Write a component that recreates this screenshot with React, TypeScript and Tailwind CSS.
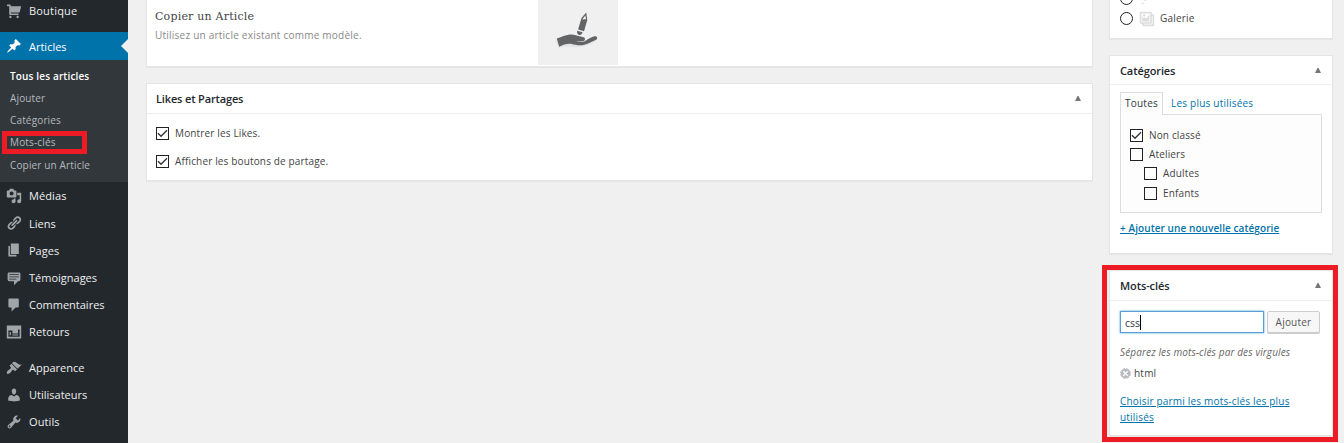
import React from "react";

const icons = {
  cart: "M6 13h9c.55 0 1 .45 1 1s-.45 1-1 1H5c-.55 0-1-.45-1-1V4H2c-.55 0-1-.45-1-1s.45-1 1-1h3c.55 0 1 .45 1 1v1h13l-2 8H6v1zm-.5 3c.83 0 1.5.67 1.5 1.5S6.33 19 5.5 19 4 18.33 4 17.5 4.67 16 5.5 16zm9 0c.83 0 1.5.67 1.5 1.5s-.67 1.5-1.5 1.5-1.5-.67-1.5-1.5.67-1.5 1.5-1.5z",
  pin: "M10.44 3.02l1.82-1.82 6.36 6.35-1.83 1.82c-1.05-.68-2.48-.57-3.41.36l-.75.75c-.92.93-1.04 2.35-.35 3.41l-1.83 1.82-2.41-2.41-2.8 2.79c-.42.42-3.38 2.71-3.8 2.29s1.86-3.39 2.28-3.81l2.79-2.79L4.1 9.36l1.83-1.82c1.05.69 2.48.57 3.4-.36l.75-.75c.93-.92 1.05-2.35.36-3.41z",
  media: "M13 11V4c0-.55-.45-1-1-1h-1.67L9 1H5L3.67 3H2c-.55 0-1 .45-1 1v7c0 .55.45 1 1 1h10c.55 0 1-.45 1-1zM7 4.5c1.38 0 2.5 1.12 2.5 2.5S8.38 9.5 7 9.5 4.5 8.38 4.5 7 5.62 4.5 7 4.5zM14 6h5v10.5c0 1.38-1.12 2.5-2.5 2.5S14 17.88 14 16.5s1.12-2.5 2.5-2.5c.17 0 .34.02.5.05V9h-3V6zm-4 8.05V13h2v3.5c0 1.38-1.12 2.5-2.5 2.5S7 17.88 7 16.5 8.12 14 9.5 14c.17 0 .34.02.5.05z",
  link: "M17.74 2.76c1.68 1.69 1.68 4.41 0 6.1l-1.53 1.52c-1.12 1.12-2.7 1.47-4.14 1.09l2.62-2.61.76-.77.76-.76c.84-.84.84-2.2 0-3.04-.84-.85-2.2-.85-3.04 0l-.77.76-3.38 3.38c-.37-1.44-.02-3.02 1.1-4.14l1.52-1.53c1.69-1.68 4.42-1.68 6.1 0zM8.59 13.43l5.34-5.34c.42-.42.42-1.1 0-1.52-.44-.43-1.13-.39-1.53 0l-5.33 5.34c-.42.42-.42 1.1 0 1.52.44.43 1.13.39 1.52 0zm-.76 2.29l4.14-4.15c.38 1.44.03 3.02-1.09 4.14l-1.52 1.53c-1.69 1.68-4.41 1.68-6.1 0-1.68-1.68-1.68-4.42 0-6.1l1.53-1.52c1.12-1.12 2.7-1.47 4.14-1.1l-4.14 4.15c-.85.84-.85 2.2 0 3.05.84.84 2.2.84 3.04 0z",
  page: "M6 15V2h10v13H6zm-1 1h8v2H3V5h2v11z",
  testimonial: "M4 3h12c.55 0 1.02.2 1.41.59S18 4.45 18 5v7c0 .55-.2 1.02-.59 1.41S16.55 14 16 14h-1l-5 5v-5H4c-.55 0-1.02-.2-1.41-.59S2 12.55 2 12V5c0-.55.2-1.02.59-1.41S3.45 3 4 3zm12 2.200H4v1.200h12V5.200zm0 2.800H4v1.200h12V8zm-3 2.800H4V12h9v-1.200z",
  comment: "M4 2h11c.6 0 1 .4 1 1v9c0 .6-.4 1-1 1h-3l-5 5v-5H4c-.6 0-1-.4-1-1V3c0-.6.400-1 1-1z",
  feedback: "M1 2h18v16H1zM3 7v9h14V7h-2v5H8V8H3zM8 13h7v1.400H8zM4.500 10h1.500v4H4.500z",
  brush: "M14.48 11.06L7.41 3.99l1.5-1.5c.5-.56 2.3-.47 3.51.32 1.21.8 1.43 1.28 2.91 2.1 1.18.64 2.45 1.26 4.45.85zm-.71.71L6.7 4.7 4.93 6.47c-.39.39-.39 1.02 0 1.41l1.06 1.06c.39.39.39 1.03 0 1.42-.6.6-1.43 1.11-2.21 1.69-.35.26-.7.53-1.01.84C1.43 14.23.4 16.08 1.4 17.07c.99 1 2.84-.03 4.18-1.36.31-.31.58-.66.85-1.02.57-.78 1.08-1.61 1.69-2.21.39-.39 1.02-.39 1.41 0l1.06 1.06c.39.39 1.02.39 1.41 0z",
  user: "M10 9.25c-2.27 0-2.73-3.44-2.73-3.44C7 4.02 7.82 2 9.97 2c2.16 0 2.98 2.02 2.71 3.81 0 0-.41 3.44-2.68 3.44zm0 2.57L12.72 10c2.39 0 4.52 2.33 4.52 4.53v2.49s-3.65 1.13-7.24 1.13c-3.65 0-7.24-1.13-7.24-1.13v-2.49c0-2.25 1.94-4.48 4.47-4.48z",
  wrench: "M16.68 9.77c-1.34 1.34-3.3 1.67-4.95.99l-5.41 6.52c-.99.99-2.59.99-3.58 0s-.99-2.59 0-3.57l6.52-5.42c-.68-1.65-.35-3.61.99-4.95 1.28-1.28 3.12-1.62 4.72-1.06l-2.89 2.89 2.82 2.82 2.86-2.87c.53 1.58.18 3.39-1.08 4.65zM3.81 16.21c.4.39 1.04.39 1.43 0 .4-.4.4-1.04 0-1.43-.39-.4-1.03-.4-1.43 0-.39.39-.39 1.03 0 1.43z",
  gallery: "M16 4h1.96c.57 0 1.04.47 1.04 1.04v12.92c0 .57-.47 1.04-1.04 1.04H5.04C4.47 19 4 18.53 4 17.96V16H2.040C1.47 16 1 15.53 1 14.96V2.04C1 1.47 1.47 1 2.04 1h12.92c.57 0 1.04.47 1.04 1.04V4zM3 14h11V3H3v11zm5-8.5C8 4.67 7.33 4 6.5 4S5 4.67 5 5.5 5.67 7 6.5 7 8 6.33 8 5.5zm2 4.500s1-5 3-5v8H4V7c2 0 2 3 2 3s.33-2 2-2 2 2 2 2zm7 7V6h-1v8.96c0 .57-.47 1.04-1.04 1.04H6v1h11z",
};

type IconName = keyof typeof icons;

function Icon({ name, className = "" }: { name: IconName; className?: string }) {
  return (
    <svg viewBox="0 0 20 20" className={`size-4 shrink-0 ${className}`} fill="currentColor" fillRule="evenodd">
      <path d={icons[name]} />
    </svg>
  );
}

function MenuItem({ icon, label, tracking = "" }: { icon: IconName; label: string; tracking?: string }) {
  return (
    <a className="flex h-[27.2px] items-center pl-1.5 text-[11px] text-[#eeeeee]">
      <Icon name={icon} className="mr-[7px] text-[#a0a5aa]" />
      <span className={`pt-px whitespace-nowrap ${tracking}`}>{label}</span>
    </a>
  );
}

function Check({ checked = false }: { checked?: boolean }) {
  return (
    <span className="flex size-[13px] shrink-0 items-center justify-center border border-[#222222] bg-white">
      {checked && (
        <svg viewBox="0 0 11 11" className="size-[11px]" fill="none" stroke="#333333" strokeWidth="1.4">
          <path d="M1 5.3 4 8.300 10 2.200" />
        </svg>
      )}
    </span>
  );
}

function CheckRow({ label, checked, className }: { label: string; checked?: boolean; className: string }) {
  return (
    <label className={`flex items-center whitespace-nowrap text-[10px] tracking-[0.15px] text-[#444444] ${className}`}>
      <Check checked={checked} />
      <span className="ml-1.5">{label}</span>
    </label>
  );
}

function Header({ title, className, tracking = "" }: { title: string; className: string; tracking?: string }) {
  return (
    <header className={`flex items-center justify-between border-b border-[#eeeeee] ${className}`}>
      <h2 className={`pt-0.5 text-[11px] font-semibold text-[#23282d] ${tracking}`}>{title}</h2>
      <svg viewBox="0 0 6 5" className="h-[5px] w-1.5" fill="#72777c">
        <path d="M0 5 2.500 0h1L6 5z" />
      </svg>
    </header>
  );
}

const card = "border border-[#e5e5e5] bg-white shadow-[0_1px_1px_rgba(0,0,0,0.04)]";

function Sidebar() {
  return (
    <nav className="h-full w-32 shrink-0 overflow-hidden bg-[#23282d]">
      <div className="-mt-[3px] h-[35px] pt-[0.500px]">
        <MenuItem icon="cart" label="Boutique" tracking="tracking-[0.2px]" />
      </div>
      <a className="flex h-7 items-center bg-[#0073aa] pl-1.5 text-[11px] text-white">
        <Icon name="pin" className="mr-[7px]" />
        <span className="grow pt-[3px]">Articles</span>
        <svg viewBox="0 0 7 14" className="h-3.5 w-[7px]" fill="#f0f0f0">
          <path d="M7 0v14L0 7z" />
        </svg>
      </a>
      <div className="flex h-[122px] flex-col bg-[#32373c] pt-[5px] text-[10px] tracking-[0.15px] whitespace-nowrap text-[#b4b9be]">
        <a className="flex h-[22px] items-center pl-2.5 font-semibold text-white">Tous les articles</a>
        <a className="flex h-[22px] items-center pl-2.5">Ajouter</a>
        <a className="flex h-[22px] items-center pl-2.5">Catégories</a>
        <a className="ml-0.5 flex h-[23px] w-[85px] items-center border-[5px] border-[#ed1c24] pl-[3px] leading-3">
          <span className="-mt-px">Mots-clés</span>
        </a>
        <a className="flex h-[23px] items-center pl-2.5">Copier un Article</a>
      </div>
      <div className="pt-[0.500px]">
        <MenuItem icon="media" label="Médias" tracking="tracking-[0.1px]" />
        <MenuItem icon="link" label="Liens" />
        <MenuItem icon="page" label="Pages" />
        <MenuItem icon="testimonial" label="Témoignages" />
        <MenuItem icon="comment" label="Commentaires" />
        <MenuItem icon="feedback" label="Retours" tracking="tracking-[0.1px]" />
      </div>
      <div className="pt-[8.500px]">
        <MenuItem icon="brush" label="Apparence" />
        <MenuItem icon="user" label="Utilisateurs" />
        <MenuItem icon="wrench" label="Outils" tracking="tracking-[0.1px]" />
      </div>
    </nav>
  );
}

function HandPencil() {
  return (
    <svg viewBox="0 0 80 65" className="h-[65px] w-20 shrink-0 bg-[#f0f0f0]">
      <path fill="#e4e4e4" transform="translate(-1.500 1)" d="M19 39l3 8c8-3 15 0 23-1 5-.7 10-3.500 14-6z" />
      <g fill="#636466">
        <path d="M18.800 38.500c4-.8 8-3.600 13-4 5-.2 8 1.800 13 2.500 2.500.4 2.800 2.700 1.200 4-2.500.8-5 .3-7.800.4 3 1 7 1 9-.4 3-2 5.500-3.700 9-4.700 3-.6 4 2.200 1.700 3.600-4 1.500-8 4-12.500 5-4.500 1-8-.3-11.900-.9-4.500-.6-8 .9-12.300 2.700z" />
        <path d="m43.500 18 4.700-5.500 1.100 7.500-3.300 11.300-5.900-1.800z" />
        <path d="m39.200 30.800 5.300 1.500c-.5 2-1.700 3.100-3.400 2.600s-2.400-2-1.900-4.100z" />
      </g>
      <path d="m44.400 19.200 2.900-3.700.9 4-1.400-.6-.9.700z" fill="#f0f0f0" />
    </svg>
  );
}

function MainColumn() {
  return (
    <main className="ml-[18px] flex w-[947px] shrink-0 flex-col gap-4">
      <section className={`${card} flex h-[67px] border-t-0`}>
        <div className="w-[391px] pt-2 pl-2">
          <h3 className="font-['DejaVu_Serif',serif] text-[11px] leading-[17px] tracking-[0.2px] text-[#444444]">Copier un Article</h3>
          <p className="text-[10px] leading-[21px] tracking-[0.23px] text-[#888888]">Utilisez un article existant comme modèle.</p>
        </div>
        <HandPencil />
      </section>
      <section className={`${card} h-[98px]`}>
        <Header title="Likes et Partages" className="h-[30px] pr-[11px] pl-[9px]" tracking="tracking-[-0.15px]" />
        <div className="flex flex-col pt-[5px] pl-[9px]">
          <CheckRow label="Montrer les Likes." checked className="h-7" />
          <CheckRow label="Afficher les boutons de partage." checked className="h-7" />
        </div>
      </section>
    </main>
  );
}

function Aside() {
  return (
    <aside className="ml-[9px] flex w-[236px] shrink-0 flex-col">
      <section className={`${card} ml-[7px] h-[39px] w-56 overflow-hidden border-t-0 pl-2.5`}>
        <div className="-mt-2.5 flex h-[18px] items-center">
          <span className="mt-[-1px] size-[13px] rounded-full border border-[#222222]" />
          <svg viewBox="0 0 8 8" className="mt-1 ml-2 size-2" fill="none" stroke="#dddddd" strokeWidth="1.500">
            <path d="M1 6.500h1.500M4 0v4M6 0v2" />
          </svg>
        </div>
        <div className="flex h-[21px] items-center text-[10px] tracking-[0.18px] text-[#444444]">
          <span className="size-[13px] rounded-full border border-[#222222]" />
          <Icon name="gallery" className="mr-[5px] ml-1.5 text-[#dddddd]" />
          Galerie
        </div>
      </section>
      <section className={`${card} mt-4 ml-[7px] h-[199px] w-56`}>
        <Header title="Catégories" className="h-[29px] pt-px pr-[11px] pl-2.5" tracking="tracking-[-0.1px]" />
        <div className="px-2.5 pt-[7px] text-[10px] tracking-[0.22px]">
          <div className="flex h-[22px] items-center">
            <span className="-mb-px flex h-[23px] w-[43px] items-center justify-center border border-b-0 border-[#dddddd] bg-[#fdfdfd] pb-0.5 text-[#32373c]">Toutes</span>
            <span className="ml-2 text-[#0073aa]">Les plus utilisées</span>
          </div>
          <div className="flex h-[99px] flex-col border border-[#dddddd] bg-[#fdfdfd] pt-[11px] pl-[9px]">
            <CheckRow label="Non classé" checked className="h-[19px]" />
            <CheckRow label="Ateliers" className="h-[19px]" />
            <CheckRow label="Adultes" className="h-5 pb-px pl-3.5" />
            <CheckRow label="Enfants" className="h-[18px] pl-3.5" />
          </div>
          <a className="mt-[7px] block leading-4 font-semibold tracking-[0.08px] whitespace-nowrap text-[#0073aa] underline">+ Ajouter une nouvelle catégorie</a>
        </div>
      </section>
      <div className="mt-[11px] h-[177px] border-[5px] border-[#ed1c24] pl-[2px]">
        <section className={`${card} h-[166px] w-56`}>
          <Header title="Mots-clés" className="h-[30px] pr-[11px] pl-2.5" tracking="tracking-[-0.1px]" />
          <div className="pt-2.5 pl-2.5 text-[10px] tracking-[0.22px]">
            <div className="flex gap-[3px]">
              <div className="flex h-[22px] w-36 items-center border border-[#5b9dd9] bg-white pl-1 text-[10.5px] tracking-normal text-[#32373c] shadow-[0_0_2px_rgba(30,140,190,0.8)]">
                <span className="pt-[3px]">css</span>
                <span className="h-[15px] w-px bg-black" />
              </div>
              <button className="h-[22px] w-[53px] rounded-[2px] border border-[#cccccc] bg-[#f7f7f7] pt-px text-[#555555] shadow-[0_1px_0_#cccccc]">Ajouter</button>
            </div>
            <p className="mt-[11px] leading-4 tracking-[0.13px] whitespace-nowrap text-[#666666] italic">Séparez les mots-clés par des virgules</p>
            <div className="mt-1 flex h-[18px] items-center text-[#444444]">
              <svg viewBox="0 0 11 11" className="mr-[3px] size-[11px]">
                <circle cx="5.500" cy="5.500" r="4.900" fill="none" stroke="#b4b9be" strokeDasharray="2.800 1.050" />
                <circle cx="5.500" cy="5.500" r="4.600" fill="#b4b9be" />
                <path d="m3.300 3.300 4.400 4.400m0-4.400L3.300 7.700" stroke="#fff" strokeWidth="1.500" />
              </svg>
              html
            </div>
            <a className="mt-[11px] block w-[180px] leading-4 tracking-[0.19px] text-[#0073aa] underline">Choisir parmi les mots-clés les plus utilisés</a>
          </div>
        </section>
      </div>
    </aside>
  );
}

export default function App() {
  return (
    <div className="flex h-[443px] w-[1344px] overflow-hidden bg-[#f0f0f0] font-['Open_Sans',sans-serif]">
      <Sidebar />
      <MainColumn />
      <Aside />
    </div>
  );
}
